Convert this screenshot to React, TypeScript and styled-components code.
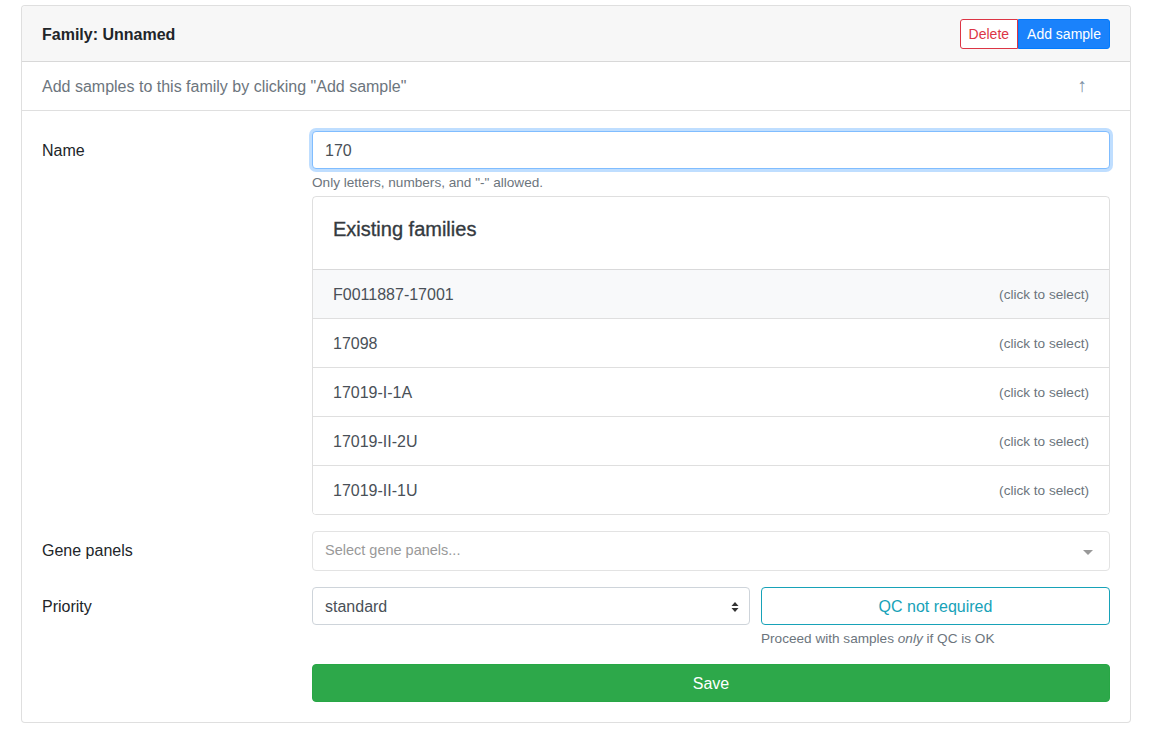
import React from "react";
import styled, { createGlobalStyle } from "styled-components";

const Global = createGlobalStyle`
  * { box-sizing: border-box; }
  body {
    margin: 5px 0 0 21px;
    font-family: "Liberation Sans", Arial, sans-serif;
    font-size: 16px;
    line-height: 1.5;
    color: #212529;
    background: #fff;
  }
`;

const Card = styled.div`
  width: 1110px;
  border: 1px solid rgba(0,0,0,.125);
  border-radius: 4px;
  background: #fff;
`;

const Header = styled.div`
  display: flex;
  align-items: center;
  justify-content: space-between;
  height: 56px;
  padding: 1px 20px 0;
  background: #f7f7f7;
  border-bottom: 1px solid rgba(0,0,0,.125);
  border-radius: 4px 4px 0 0;
`;

const Title = styled.div`
  font-weight: bold;
  font-size: 16px;
  padding-top: 1px;
`;

const BtnGroup = styled.div`
  display: flex;
`;

const SmallBtn = styled.button<{ $variant: "danger" | "primary" }>`
  font-family: inherit;
  font-size: 14px;
  line-height: 1.5;
  height: 30px;
  padding: 0 8px;
  cursor: pointer;
  border: 1px solid ${p => (p.$variant === "danger" ? "#dc3545" : "#007bff")};
  background: ${p => (p.$variant === "danger" ? "#fff" : "#1a82fb")};
  color: ${p => (p.$variant === "danger" ? "#dc3545" : "#fff")};
  border-radius: ${p => (p.$variant === "danger" ? "3px 0 0 3px" : "0 3px 3px 0")};
`;

const InfoRow = styled.div`
  display: flex;
  align-items: center;
  justify-content: space-between;
  height: 49px;
  padding: 1px 43px 0 20px;
  border-bottom: 1px solid rgba(0,0,0,.125);
  color: #6c757d;
`;

const Arrow = styled.span`
  color: #7d8fa3;
  font-size: 19px;
`;

const Body = styled.div`
  padding: 20px;
`;

const FormRow = styled.div`
  display: grid;
  grid-template-columns: 270px 1fr;
  margin-bottom: 16px;
  &:last-child { margin-bottom: 0; }
`;

const Label = styled.label`
  padding-top: 8px;
  font-size: 16px;
`;

const Field = styled.div`
  display: flex;
  flex-direction: column;
`;

const TextInput = styled.input`
  font-family: inherit;
  font-size: 16px;
  height: 38px;
  padding: 7px 12px 5px;
  border: 1px solid #80bdff;
  border-radius: 4px;
  color: #495057;
  outline: none;
  box-shadow: 0 0 0 3px rgba(0,123,255,.25);
`;

const Help = styled.small`
  display: block;
  margin-top: 4px;
  font-size: 13.6px;
  color: #6c757d;
  line-height: 19px;
  em { font-style: italic; }
`;

const ListCard = styled.div`
  margin-top: 4px;
  border: 1px solid rgba(0,0,0,.125);
  border-radius: 4px;
  overflow: hidden;
`;

const ListTitle = styled.h5`
  margin: 0;
  padding: 20px 20px 28px;
  font-size: 20px;
  font-weight: 500;
  line-height: 1.2;
  color: #343a40;
  -webkit-text-stroke: 0.35px #343a40;
`;

const Item = styled.div<{ $active?: boolean }>`
  display: flex;
  align-items: center;
  justify-content: space-between;
  height: 49px;
  padding: 2px 20px 0;
  border-top: 1px solid rgba(0,0,0,.125);
  background: ${p => (p.$active ? "#f8f9fa" : "#fff")};
  color: #495057;
`;

const ItemHint = styled.span`
  font-size: 13.6px;
  color: #6c757d;
`;

const MultiSelect = styled.div`
  display: flex;
  align-items: center;
  justify-content: space-between;
  height: 40px;
  padding: 0 13px 0 12px;
  border: 1px solid #e3e3e3;
  border-radius: 4px;
  font-size: 14.5px;
  color: #999;
`;

const Caret = styled.span`
  width: 0;
  height: 0;
  border-left: 5px solid transparent;
  border-right: 5px solid transparent;
  border-top: 5px solid #999;
  margin-right: 3px;
  margin-top: 2px;
`;

const PriorityGrid = styled.div`
  display: grid;
  grid-template-columns: 438px 1fr;
  column-gap: 11px;
`;

const SelectBox = styled.div`
  display: flex;
  align-items: center;
  justify-content: space-between;
  height: 38px;
  padding: 1px 10px 0 12px;
  border: 1px solid #ced4da;
  border-radius: 4px;
  color: #495057;
`;

const Updown = styled.svg`
  width: 8px;
  height: 12px;
`;

const OutlineBtn = styled.button`
  font-family: inherit;
  font-size: 16px;
  height: 38px;
  padding-top: 2px;
  border: 1px solid #17a2b8;
  border-radius: 4px;
  color: #17a2b8;
  background: #fff;
  cursor: pointer;
`;

const SaveBtn = styled.button`
  font-family: inherit;
  font-size: 16px;
  height: 38px;
  width: 100%;
  padding-top: 2px;
  border: 1px solid #28a745;
  border-radius: 4px;
  background: #2da84a;
  color: #fff;
  cursor: pointer;
`;

const families = ["F0011887-17001", "17098", "17019-I-1A", "17019-II-2U", "17019-II-1U"];

export default function App() {
  return (
    <>
      <Global />
      <Card>
        <Header>
          <Title>Family: Unnamed</Title>
          <BtnGroup>
            <SmallBtn $variant="danger">Delete</SmallBtn>
            <SmallBtn $variant="primary">Add sample</SmallBtn>
          </BtnGroup>
        </Header>
        <InfoRow>
          <span>Add samples to this family by clicking "Add sample"</span>
          <Arrow>↑</Arrow>
        </InfoRow>
        <Body>
          <FormRow>
            <Label>Name</Label>
            <Field>
              <TextInput defaultValue="170" />
              <Help>Only letters, numbers, and "-" allowed.</Help>
              <ListCard>
                <ListTitle>Existing families</ListTitle>
                {families.map((f, i) => (
                  <Item key={f} $active={i === 0}>
                    <span>{f}</span>
                    <ItemHint>(click to select)</ItemHint>
                  </Item>
                ))}
              </ListCard>
            </Field>
          </FormRow>
          <FormRow>
            <Label>Gene panels</Label>
            <MultiSelect>
              <span>Select gene panels...</span>
              <Caret />
            </MultiSelect>
          </FormRow>
          <FormRow>
            <Label>Priority</Label>
            <PriorityGrid>
              <SelectBox>
                <span>standard</span>
                <Updown viewBox="0 0 8 12">
                  <path d="M4 1 L7.5 5 L0.5 5 Z M4 11 L7.5 7 L0.5 7 Z" fill="#333" />
                </Updown>
              </SelectBox>
              <Field>
                <OutlineBtn>QC not required</OutlineBtn>
                <Help>
                  Proceed with samples <em>only</em> if QC is OK
                </Help>
              </Field>
            </PriorityGrid>
          </FormRow>
          <FormRow>
            <span />
            <SaveBtn>Save</SaveBtn>
          </FormRow>
        </Body>
      </Card>
    </>
  );
}
